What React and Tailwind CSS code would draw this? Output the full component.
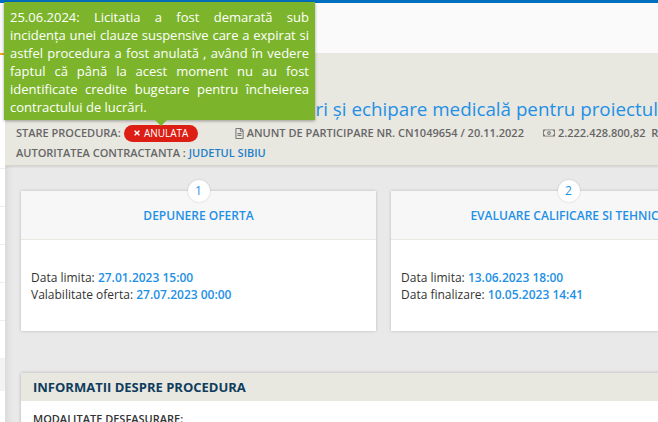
import React from "react";
import { FaTimes, FaRegFileAlt, FaRegMoneyBillAlt } from "react-icons/fa";

const font = { fontFamily: '"Open Sans", sans-serif' };

function Card({ n, title, rows }) {
  return (
    <div className="relative h-[140px] bg-white shadow-[0_0_3px_rgba(0,0,0,0.2)]">
      <div className="absolute left-1/2 top-[-11px] flex h-[22px] w-[22px] -translate-x-1/2 items-center justify-center rounded-full bg-white text-[12px] font-medium text-[#1e90e6] shadow-[0_0_2px_rgba(0,0,0,0.2)]">
        {n}
      </div>
      <div className="flex h-[49px] items-center justify-center whitespace-nowrap border-b border-[#e8e7e0] bg-[#f7f7f7] pt-[1px] text-[12px] font-semibold text-[#1e90e6]">
        {title}
      </div>
      <div className="px-[10px] pt-[29px] text-[12px] leading-[17px] text-[#333]">
        {rows.map(([k, v]) => (
          <div key={k}>
            {k}: <span className="font-semibold text-[#1e90e6]">{v}</span>
          </div>
        ))}
      </div>
    </div>
  );
}

export default function App() {
  return (
    <div className="relative h-[422px] w-[658px] overflow-hidden bg-[#e9e9e9]" style={font}>
      <div className="h-[3px] bg-[#0070c0]" />
      <div className="h-[50px] bg-[#fafafa] shadow-[0_1px_2px_rgba(0,0,0,0.25)]" />
      <div className="flex h-[369px]">
        <div className="w-[5px] shrink-0 bg-white">
          <div className="h-[2px] bg-[#f5a623]" />
          <div className="h-[114px] border-b border-[#eeeeee]" />
          {[0, 1, 2, 3].map((i) => (
            <div key={i} className="h-[38px] border-b border-[#eeeeee]" />
          ))}
          <div className="mt-[37px] h-[33px] bg-[#f3f3f3]" />
        </div>
        <div className="min-w-0 flex-1 overflow-hidden shadow-[inset_7px_0_6px_-4px_rgba(0,0,0,0.07)]">
          <div className="h-[113px] border-b border-[#d5d4cd] bg-[#e8e7e0] pl-[11px] shadow-[0_1px_2px_rgba(0,0,0,0.1)]">
            <div className="whitespace-nowrap pl-[11px] pt-[43px] text-[18.8px] leading-[27px] text-[#1e90e6]">
              Achiziție construcții, servicii, dotări și echipare medicală pentru proiectul
            </div>
            <div className="flex h-[19px] w-max items-center whitespace-nowrap pt-[1px] text-[11px] font-semibold text-[#666]">
              <span>STARE PROCEDURA:</span>
              <span className="ml-[3px] flex h-[17px] w-[74px] items-center justify-center gap-[3px] rounded-full bg-[#dc1e14] text-[10px] font-normal text-white">
                <FaTimes className="h-[8px] w-[8px]" />
                ANULATA
              </span>
              <FaRegFileAlt className="ml-[36px] h-[11px] w-[11px] text-[#777]" />
              <span className="ml-[2px]">ANUNT DE PARTICIPARE NR. CN1049654 / 20.11.2022</span>
              <FaRegMoneyBillAlt className="ml-[19px] h-[12px] w-[12px] text-[#777]" />
              <span className="ml-[3px]">2.222.428.800,82&nbsp;&nbsp;RON</span>
            </div>
            <div className="whitespace-nowrap pt-[3px] text-[11px] font-semibold text-[#666]">
              AUTORITATEA CONTRACTANTA : <span className="text-[#1f7fc9]">JUDETUL SIBIU</span>
            </div>
          </div>
          <div className="grid w-[725px] grid-cols-[355px_355px] gap-[15px] pl-[16px] pt-[25px]">
            <Card n="1" title="DEPUNERE OFERTA" rows={[["Data limita", "27.01.2023 15:00"], ["Valabilitate oferta", "27.07.2023 00:00"]]} />
            <Card n="2" title="EVALUARE CALIFICARE SI TEHNICA" rows={[["Data limita", "13.06.2023 18:00"], ["Data finalizare", "10.05.2023 14:41"]]} />
          </div>
          <div className="ml-[16px] mt-[42px] w-[720px] bg-white shadow-[0_0_3px_rgba(0,0,0,0.25)]">
            <div className="flex h-[28px] items-center bg-[#e8e7e0] px-[12px] pt-[1px] text-[13px] font-bold text-[#0f3d5e]">
              INFORMATII DESPRE PROCEDURA
            </div>
            <div className="px-[12px] pt-[10px] text-[11px] font-semibold text-[#333]">MODALITATE DESFASURARE:</div>
          </div>
        </div>
      </div>

      <div className="absolute left-[4px] top-[2px] h-[118px] w-[311px] bg-[#7cb52b] px-[6px] pt-[6px] text-justify text-[13px] leading-[18px] text-white shadow-[0_1px_3px_rgba(0,0,0,0.35)]">
        25.06.2024: Licitatia a fost demarată sub incidența unei clauze suspensive care a expirat si astfel procedura a fost anulată , având în vedere faptul că până la acest moment nu au fost identificate credite bugetare pentru încheierea contractului de lucrări.
        <div className="absolute left-[151px] top-[118px] h-0 w-0 border-x-[6px] border-t-[6px] border-x-transparent border-t-[#7cb52b]" />
      </div>
    </div>
  );
}
